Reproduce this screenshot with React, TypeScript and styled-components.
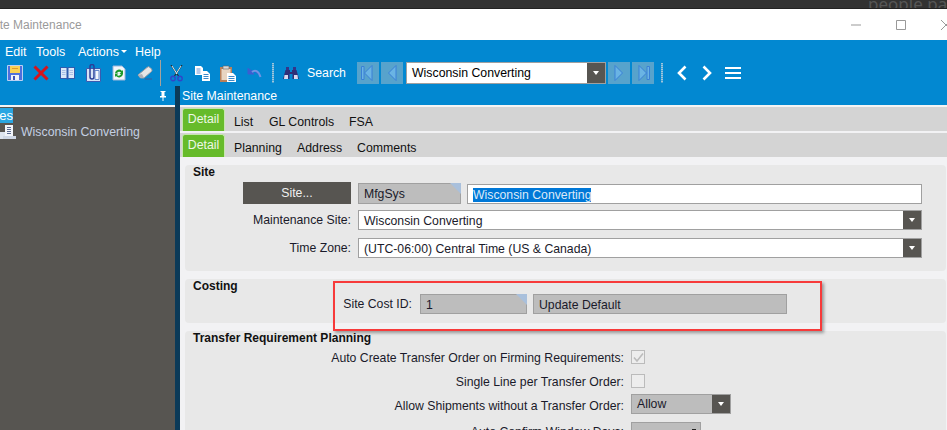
import React from 'react'
import styled, { createGlobalStyle } from 'styled-components'

const GlobalStyle = createGlobalStyle`
  html, body {
    margin: 0;
    padding: 0;
    background: #f2f2f4;
  }
  * {
    box-sizing: border-box;
  }
`

const Page = styled.div`
  width: 947px;
  height: 430px;
  overflow: hidden;
  display: flex;
  flex-direction: column;
  font-family: "Liberation Sans", Arial, sans-serif;
  font-size: 12.25px;
  color: #111;
`

const DesktopStrip = styled.div`
  height: 9px;
  flex: none;
  overflow: hidden;
  background: #323232;
  border-bottom: 1px solid #222;
  padding-left: 868px;
  color: #565656;
  font-family: "Noto Sans", sans-serif;
  font-size: 17px;
  line-height: 8px;
  white-space: nowrap;
`

const TitleBar = styled.div`
  height: 31px;
  flex: none;
  display: flex;
  align-items: center;
  background: #fff;
  color: #9a9a9a;
  font-size: 12px;
  overflow: hidden;
`

const TitleText = styled.span`
  margin-left: -11px;
  margin-top: 1px;
`

const WindowControls = styled.div`
  margin-left: auto;
  margin-right: -21px;
  display: flex;
`

const WindowButton = styled.div`
  width: 45px;
  height: 31px;
  display: flex;
  align-items: center;
  justify-content: center;
`

const MenuBar = styled.div`
  height: 22px;
  flex: none;
  display: flex;
  align-items: center;
  padding-left: 5px;
  background: #0288d1;
  color: #fff;
  font-size: 12.5px;
`

const MenuItem = styled.span<{ $w: number }>`
  width: ${p => p.$w}px;
  flex: none;
  display: inline-flex;
  align-items: center;
  gap: 2px;
  padding-top: 1px;
`

const Caret = styled.i`
  width: 0;
  height: 0;
  border-left: 3px solid transparent;
  border-right: 3px solid transparent;
  border-top: 3px solid #fff;
`

const ToolBar = styled.div`
  height: 24px;
  flex: none;
  display: flex;
  align-items: flex-start;
  padding-left: 2px;
  background: #0288d1;
`

const ToolSlot = styled.div<{ $w?: number }>`
  width: ${p => p.$w ?? 26}px;
  height: 22px;
  flex: none;
  display: flex;
  align-items: center;
  justify-content: center;
`

const ToolSeparator = styled.div`
  width: 1px;
  height: 26px;
  margin: -2px 2px 0 2px;
  flex: none;
  background: #a8a29a;
`

const Grip = styled.div`
  width: 2px;
  height: 20px;
  margin-top: 1px;
  flex: none;
  background: repeating-linear-gradient(#9fc6dc 0 1px, #4fa3d3 1px 2px);
`

const SearchLabel = styled.span`
  color: #fff;
  font-size: 12.3px;
  line-height: 22px;
  margin-left: -1px;
  width: 50px;
  flex: none;
`

const NavButton = styled.div`
  width: 22px;
  height: 22px;
  flex: none;
  display: flex;
  align-items: center;
  justify-content: center;
  background: #57a3cc;
`

const RecordCombo = styled.div`
  width: 200px;
  height: 22px;
  flex: none;
  display: flex;
  background: #fff;
  border: 1px solid #a0a0a0;
  font-size: 12.3px;
  line-height: 20px;
  padding-left: 5px;
  color: #000;
`

const ComboValue = styled.span`
  flex: 1;
  white-space: nowrap;
`

const ComboArrow = styled.div`
  width: 18px;
  flex: none;
  align-self: stretch;
  display: flex;
  align-items: center;
  justify-content: center;
  background: #575551;

  &::after {
    content: "";
    border-left: 3.5px solid transparent;
    border-right: 3.5px solid transparent;
    border-top: 4px solid #fff;
  }
`

const Body = styled.div`
  flex: 1;
  min-height: 0;
  display: flex;
`

const LeftPane = styled.div`
  width: 175px;
  flex: none;
  display: flex;
  flex-direction: column;
`

const PaneHeader = styled.div`
  height: 19px;
  flex: none;
  display: flex;
  align-items: center;
  background: #0288d1;
  color: #fff;
`

const PinHeader = styled(PaneHeader)`
  justify-content: flex-end;
  padding-right: 8px;
`

const WhiteRule = styled.div`
  height: 2px;
  flex: none;
  background: #f4f4f4;
`

const TreePane = styled.div`
  flex: 1;
  background: #575551;
  color: #c4cfe2;
`

const TreeTab = styled.div`
  width: 13px;
  height: 15px;
  margin-top: 1px;
  overflow: hidden;
  background: #29a6e2;
  color: #fff;
  font-size: 13px;
  line-height: 15px;
  display: flex;
  justify-content: flex-end;
`

const TreeRow = styled.div`
  display: flex;
  align-items: center;
  gap: 5px;
  margin-top: 1px;
  height: 16px;
  font-size: 12.3px;
  white-space: nowrap;
`

const Splitter = styled.div`
  width: 5px;
  flex: none;
  background: #0b3a58;
`

const RightPane = styled.div`
  flex: 1;
  min-width: 0;
  display: flex;
  flex-direction: column;
  background: #f2f2f4;
`

const MainTitle = styled(PaneHeader)`
  padding-left: 2px;
  font-size: 12.3px;
`

const TabRow = styled.div`
  height: 24px;
  flex: none;
  display: flex;
  align-items: flex-end;
  padding-left: 2px;
  background: #d4d4d4;
  margin-bottom: 2px;
`

const Tab = styled.div<{ $w?: number }>`
  width: ${p => p.$w}px;
  height: 24px;
  flex: none;
  padding-top: 8px;
  font-size: 12.3px;
  line-height: 14px;
  white-space: nowrap;
`

const ActiveTab = styled.div`
  width: 43px;
  height: 23px;
  margin-right: 9px;
  flex: none;
  background: #66bb2a;
  color: #eef8e6;
  border: 1px solid #c6e6ae;
  border-bottom: none;
  border-radius: 3px 3px 0 0;
  font-size: 12.3px;
  line-height: 20px;
  text-align: center;
`

const Groups = styled.div`
  flex: 1;
  min-height: 0;
  display: flex;
  flex-direction: column;
  gap: 8px;
  padding: 6px 1px 0 5px;
`

const Group = styled.section<{ $h: number }>`
  position: relative;
  height: ${p => p.$h}px;
  flex: none;
  background: #e8e8e8;
  border-radius: 4px;
  padding-left: 8px;
`

const GroupTitle = styled.h3`
  margin: 0;
  font-size: 12px;
  line-height: 14px;
  font-weight: 700;
  color: #111;
`

const FormRow = styled.div<{ $top: number; $h?: number; $align?: string }>`
  display: flex;
  align-items: ${p => p.$align ?? 'center'};
  margin-top: ${p => p.$top}px;
  height: ${p => p.$h ?? 20}px;
`

const Label = styled.label<{ $w: number }>`
  width: ${p => p.$w}px;
  flex: none;
  text-align: right;
  white-space: nowrap;
  color: #1a1a2a;
`

const Field = styled.div<{ $w: number; $h?: number; $tone?: 'white' | 'gray'; $ml?: number }>`
  width: ${p => p.$w}px;
  height: ${p => p.$h ?? 20}px;
  flex: none;
  margin-left: ${p => p.$ml ?? 0}px;
  display: flex;
  align-items: center;
  padding: 1px 0 0 5px;
  border: 1px solid #a0a0a0;
  background: ${p => (p.$tone === 'gray' ? '#bdbdbd' : '#fff')};
  position: relative;
  white-space: nowrap;
  color: #1a1a2a;

  ${ComboArrow} {
    margin-top: -1px;
  }
`

const RaisedField = styled(Field)`
  padding-top: 0;
  margin-top: -4px;

  ${ComboArrow} {
    margin-top: 0;
  }
`

const KeyCorner = styled.i`
  position: absolute;
  top: -1px;
  right: -1px;
  width: 0;
  height: 0;
  border-top: 11px solid #a9c0dc;
  border-left: 11px solid transparent;
`

const FieldCaret = styled.i`
  position: absolute;
  top: 6px;
  right: 4px;
  width: 4px;
  height: 3px;
  background: #222;
`

const Selected = styled.span`
  background: #0078d7;
  color: #dce9f7;
  line-height: 14px;
`

const LookupButton = styled.div`
  width: 108px;
  height: 22px;
  flex: none;
  background: #575551;
  color: #f0f0f0;
  text-align: center;
  line-height: 22px;
  margin: 0 7px 0 50px;
`

const Check = styled.div`
  width: 14px;
  height: 14px;
  margin: -2px 0 0 7px;
  flex: none;
  display: flex;
  align-items: center;
  justify-content: center;
  background: #ededed;
  border: 1px solid #bbb;
`

const Callout = styled.div`
  position: absolute;
  left: 148px;
  top: 2px;
  width: 489px;
  height: 50px;
  border: 2px solid #f73a3a;
  box-shadow: 2px 2px 3px rgba(0, 0, 0, 0.35);
  pointer-events: none;
  z-index: 2;
`

const Save = () => (
  <svg width="16" height="16" viewBox="0 0 16 16">
    <path d="M.5.500h15v15H.5z" fill="#4f6fdc" stroke="#bcd0f2" />
    <path d="M3 1h10v7H3z" fill="#f7d154" />
    <path d="M5 3h6v1H5z" fill="#e09a2a" />
    <path d="M4 10h8v5H4z" fill="#eef1f8" />
    <path d="M6 11h2v4H6z" fill="#3f52b8" />
  </svg>
)

const Cross = () => (
  <svg width="16" height="16" viewBox="0 0 16 16">
    <path d="M1.5 1.5 14.5 14.5M14.5 1.5 1.5 14.5" stroke="#d5141c" strokeWidth="3" />
  </svg>
)

const Book = () => (
  <svg width="15" height="14" viewBox="0 0 15 14">
    <path d="M0 1h7l.5 1 .5-1h7v12H8.500l-1 1-1-1H0z" fill="#2f5cae" />
    <path d="M1 2h5.500v10H1zM8.500 2H14v10H8.500z" fill="#dce8f8" />
    <path d="M2 4.500h3.500M2 6.500h3.500M2 8.500h3.500M9.500 4.500H13M9.500 6.500H13M9.500 8.500H13" stroke="#a9c0e6" />
  </svg>
)

const Clip = () => (
  <svg width="15" height="18" viewBox="0 0 15 18">
    <path d="M.5 4.500h14v13H.5z" fill="#d8e4f6" stroke="#3a5bb0" />
    <path d="M4 6V2.500a2 2 0 0 1 4 0V13a2 2 0 0 1-4 0V6" fill="none" stroke="#2b3f98" strokeWidth="1.500" />
    <path d="M9 6.500h4v9H9z" fill="#f4f7fc" stroke="#6688cc" />
  </svg>
)

const Refresh = () => (
  <svg width="14" height="16" viewBox="0 0 14 16">
    <path d="M1 1h9l3 3v11H1z" fill="#f2f6fb" stroke="#9fb6da" />
    <path d="M3 8a4 4 0 0 1 7-2l1-1v4H7.500l1.500-1.500A2.500 2.500 0 0 0 5 8zM11 9a4 4 0 0 1-7 2l-1 1V8.500h3.500L5 10a2.500 2.500 0 0 0 4-1z" fill="#1d9a2c" />
  </svg>
)

const Eraser = () => (
  <svg width="16" height="14" viewBox="0 0 16 14">
    <path d="M1 9 10 1.500a2 2 0 0 1 3 0l1.500 1.500a2 2 0 0 1 0 2.500L7 12H3.500z" fill="#e6e6e6" stroke="#9a9aa2" />
    <path d="M1 9 3.500 12H7L5 8z" fill="#b0b0b8" />
    <path d="M8 13h7" stroke="#3b5d9a" />
  </svg>
)

const Scissors = () => (
  <svg width="13" height="17" viewBox="0 0 13 17">
    <path d="M1 0 8.500 11M12 0 4.500 11" stroke="#2a2a2a" strokeWidth="1.200" />
    <path d="M2 1l5 8M11 1 6 9" stroke="#e8e8e8" />
    <circle cx="3" cy="13.500" r="2.200" fill="none" stroke="#3046c8" strokeWidth="1.400" />
    <circle cx="10" cy="13.500" r="2.200" fill="none" stroke="#3046c8" strokeWidth="1.400" />
  </svg>
)

const Copy = () => (
  <svg width="15" height="15" viewBox="0 0 15 15">
    <path d="M0 0h6l2 2v7H0z" fill="#fff" />
    <path d="M1.500 3h4M1.500 5h4M1.500 7h4" stroke="#6f95d6" />
    <path d="M7 5h5l3 3v7H7z" fill="#fff" />
    <path d="M8.500 8.500h5M8.500 10.500h5M8.500 12.500h5" stroke="#3d89c9" />
  </svg>
)

const Paste = () => (
  <svg width="16" height="17" viewBox="0 0 16 17">
    <path d="M0 2h12v15H0z" fill="#b9805a" />
    <path d="M1.500 4h9v11h-9z" fill="#e8d5c2" />
    <path d="M3 1h6v3H3z" fill="#d9d9d9" stroke="#666" strokeWidth=".6" />
    <path d="M7 8h6l3 3v6H7z" fill="#fff" />
    <path d="M8.500 11.500h6M8.500 13.500h6M8.500 15.500h6" stroke="#3d89c9" />
  </svg>
)

const Undo = () => (
  <svg width="15" height="12" viewBox="0 0 15 12">
    <path d="M1 1v6h6L5 5c3-2.500 6-1 7.500 3" fill="#3c5fd0" stroke="#3c5fd0" strokeWidth="1" />
    <path d="M5 5c3-2.500 6.500-1.500 8.500 5" fill="none" stroke="#6f94e4" strokeWidth="2" />
  </svg>
)

const Binoculars = () => (
  <svg width="16" height="13" viewBox="0 0 16 13">
    <path d="M3 0h3v3H3zM10 0h3v3h-3z" fill="#34348a" />
    <path d="M2.500 3h4.500v2h2V3h4.500L16 12H9.500V7h-3v5H0z" fill="#2f2f78" />
    <path d="M1.500 8h3.500v4h-4zM11 8h3.500l.5 4h-4z" fill="#d8d8ee" />
  </svg>
)

const NavGlyph = ({ kind }: { kind: 'first' | 'prev' | 'next' | 'last' }) => {
  const left = <path d="M15 3.500 7.500 11l7.500 7.500z" fill="#6ab4e4" stroke="#3a80d6" />
  const right = <path d="M7 3.500l7.500 7.500L7 18.500z" fill="#6ab4e4" stroke="#3a80d6" />
  return (
    <svg width="22" height="22" viewBox="0 0 22 22">
      {kind === 'first' && <path d="M4.500 4.500h2.500v13H4.500z" fill="#6ab4e4" stroke="#3a80d6" />}
      {(kind === 'first' || kind === 'prev') && left}
      {(kind === 'next' || kind === 'last') && right}
      {kind === 'last' && <path d="M15 4.500h2.500v13H15z" fill="#6ab4e4" stroke="#3a80d6" />}
    </svg>
  )
}

const Chevron = ({ flip }: { flip?: boolean }) => (
  <svg width="12" height="16" viewBox="0 0 12 16">
    <path d={flip ? 'M2.500 1.500 9 8l-6.500 6.500' : 'M9.500 1.500 3 8l6.500 6.500'} fill="none" stroke="#fff" strokeWidth="2.600" />
  </svg>
)

const Burger = () => (
  <svg width="16" height="12" viewBox="0 0 16 12">
    <path d="M0 1h16M0 6h16M0 11h16" stroke="#fff" strokeWidth="2" />
  </svg>
)

const Pin = () => (
  <svg width="8" height="10" viewBox="0 0 8 10">
    <path d="M1.500 0h5v1h-1v4h1.500v1.500H4.500V10h-1V6.500H1V5h1.500V1h-1z" fill="#fff" />
  </svg>
)

const TreeIcon = () => (
  <svg width="16" height="15" viewBox="0 0 16 15">
    <path d="M0 7h7v7H0z" fill="#dfe6f0" />
    <path d="M5 0h8v12H5z" fill="#f2f5fa" />
    <path d="M7 2.500h4M7 4.500h4M7 6.500h4M7 8.500h4" stroke="#5a6a90" />
    <path d="M3 11h13v3H3z" fill="#cfd8e6" />
  </svg>
)

const CheckMark = () => (
  <svg width="11" height="11" viewBox="0 0 11 11">
    <path d="M1 5.500 4 9l6-7.500" fill="none" stroke="#bcbcbc" strokeWidth="1.600" />
  </svg>
)

export default function App() {
  return (
    <Page>
      <GlobalStyle />
      <DesktopStrip>people pa</DesktopStrip>

      <TitleBar>
        <TitleText>Site Maintenance</TitleText>
        <WindowControls>
          <WindowButton>
            <svg width="10" height="10" viewBox="0 0 10 10"><path d="M0 5h10" stroke="#999" /></svg>
          </WindowButton>
          <WindowButton>
            <svg width="10" height="10" viewBox="0 0 10 10"><path d="M.5.500h9v9h-9z" fill="none" stroke="#999" /></svg>
          </WindowButton>
          <WindowButton>
            <svg width="10" height="10" viewBox="0 0 10 10"><path d="M0 0l10 10M10 0 0 10" stroke="#999" /></svg>
          </WindowButton>
        </WindowControls>
      </TitleBar>

      <MenuBar>
        <MenuItem $w={31}>Edit</MenuItem>
        <MenuItem $w={42}>Tools</MenuItem>
        <MenuItem $w={57}>Actions<Caret /></MenuItem>
        <MenuItem $w={40}>Help</MenuItem>
      </MenuBar>

      <ToolBar>
        <ToolSlot><Save /></ToolSlot>
        <ToolSlot><Cross /></ToolSlot>
        <ToolSlot><Book /></ToolSlot>
        <ToolSlot><Clip /></ToolSlot>
        <ToolSlot><Refresh /></ToolSlot>
        <ToolSlot><Eraser /></ToolSlot>
        <ToolSeparator />
        <ToolSlot><Scissors /></ToolSlot>
        <ToolSlot><Copy /></ToolSlot>
        <ToolSlot><Paste /></ToolSlot>
        <ToolSlot><Undo /></ToolSlot>
        <ToolSlot $w={5} />
        <Grip />
        <ToolSlot $w={34}><Binoculars /></ToolSlot>
        <SearchLabel>Search</SearchLabel>
        <NavButton><NavGlyph kind="first" /></NavButton>
        <ToolSlot $w={2} />
        <NavButton><NavGlyph kind="prev" /></NavButton>
        <ToolSlot $w={3} />
        <RecordCombo>
          <ComboValue>Wisconsin Converting</ComboValue>
          <ComboArrow />
        </RecordCombo>
        <ToolSlot $w={2} />
        <NavButton><NavGlyph kind="next" /></NavButton>
        <ToolSlot $w={2} />
        <NavButton><NavGlyph kind="last" /></NavButton>
        <ToolSlot $w={7} />
        <Grip />
        <ToolSlot $w={38}><Chevron /></ToolSlot>
        <ToolSlot $w={12}><Chevron flip /></ToolSlot>
        <ToolSlot $w={40}><Burger /></ToolSlot>
      </ToolBar>

      <Body>
        <LeftPane>
          <PinHeader><Pin /></PinHeader>
          <WhiteRule />
          <TreePane>
            <TreeTab>es</TreeTab>
            <TreeRow><TreeIcon />Wisconsin Converting</TreeRow>
          </TreePane>
        </LeftPane>

        <Splitter />

        <RightPane>
          <MainTitle>Site Maintenance</MainTitle>
          <WhiteRule />
          <TabRow>
            <ActiveTab>Detail</ActiveTab>
            <Tab $w={35}>List</Tab>
            <Tab $w={80}>GL Controls</Tab>
            <Tab $w={40}>FSA</Tab>
          </TabRow>
          <TabRow>
            <ActiveTab>Detail</ActiveTab>
            <Tab $w={63}>Planning</Tab>
            <Tab $w={60}>Address</Tab>
            <Tab $w={70}>Comments</Tab>
          </TabRow>

          <Groups>
            <Group $h={106}>
              <GroupTitle>Site</GroupTitle>
              <FormRow $top={3} $h={22} $align="flex-end">
                <LookupButton>Site...</LookupButton>
                <Field $w={103} $h={21} $tone="gray">MfgSys<KeyCorner /></Field>
                <Field $w={455} $ml={6}><Selected>Wisconsin Converting</Selected></Field>
              </FormRow>
              <FormRow $top={6}>
                <Label $w={158}>Maintenance Site:</Label>
                <Field $w={564} $ml={7}>
                  <ComboValue>Wisconsin Converting</ComboValue>
                  <ComboArrow />
                </Field>
              </FormRow>
              <FormRow $top={8}>
                <Label $w={158}>Time Zone:</Label>
                <Field $w={564} $ml={7}>
                  <ComboValue>(UTC-06:00) Central Time (US &amp; Canada)</ComboValue>
                  <ComboArrow />
                </Field>
              </FormRow>
            </Group>

            <Group $h={44}>
              <GroupTitle>Costing</GroupTitle>
              <FormRow $top={1}>
                <Label $w={219}>Site Cost ID:</Label>
                <Field $w={107} $ml={8} $tone="gray">1<KeyCorner /></Field>
                <Field $w={254} $ml={6} $tone="gray">Update Default</Field>
              </FormRow>
              <Callout />
            </Group>

            <Group $h={120}>
              <GroupTitle>Transfer Requirement Planning</GroupTitle>
              <FormRow $top={3}>
                <Label $w={431}>Auto Create Transfer Order on Firming Requirements:</Label>
                <Check><CheckMark /></Check>
              </FormRow>
              <FormRow $top={4}>
                <Label $w={431}>Single Line per Transfer Order:</Label>
                <Check />
              </FormRow>
              <FormRow $top={4}>
                <Label $w={431}>Allow Shipments without a Transfer Order:</Label>
                <RaisedField $w={100} $ml={7} $tone="gray">
                  <ComboValue>Allow</ComboValue>
                  <ComboArrow />
                </RaisedField>
              </FormRow>
              <FormRow $top={6}>
                <Label $w={431}>Auto Confirm Window Days:</Label>
                <Field $w={70} $ml={7} $tone="gray"><FieldCaret /></Field>
              </FormRow>
            </Group>
          </Groups>
        </RightPane>
      </Body>
    </Page>
  )
}
